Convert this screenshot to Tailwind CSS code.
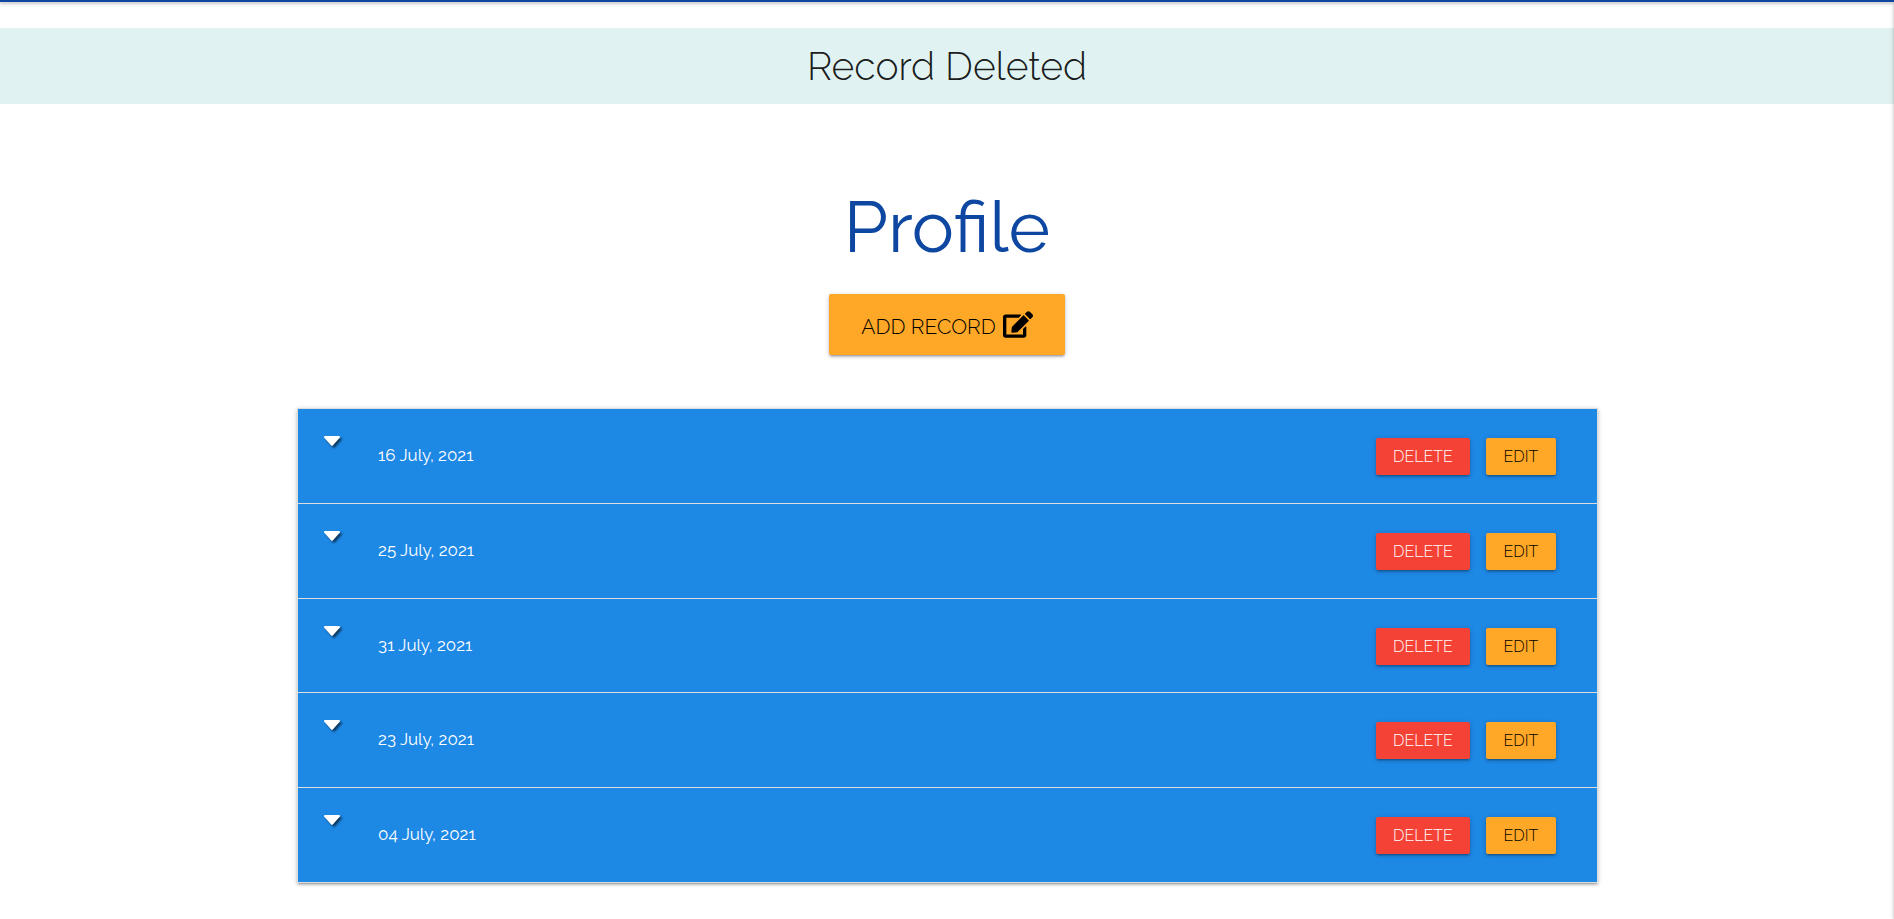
<!DOCTYPE html>
<html lang="en">
<head>
<meta charset="utf-8">
<meta name="viewport" content="width=device-width, initial-scale=1">
<title>Profile</title>
<script src="https://cdn.jsdelivr.net/npm/@tailwindcss/browser@4"></script>
</head>
<body class="relative min-h-screen overflow-x-hidden bg-white font-['Raleway','Lato',sans-serif] text-black/90">
<nav class="h-[2px] bg-[#0d47a1] shadow-[0_2px_2px_0_rgba(0,0,0,0.14),0_3px_1px_-2px_rgba(0,0,0,0.12),0_1px_5px_0_rgba(0,0,0,0.2)]"></nav>
<aside class="fixed inset-y-0 left-full w-72 shadow-[0_2px_2px_0_rgba(0,0,0,0.14),0_3px_1px_-2px_rgba(0,0,0,0.12),0_1px_5px_0_rgba(0,0,0,0.2)]"></aside>
<h4 class="mt-[26px] bg-[#e0f2f1] py-4 text-center text-[39px] leading-[44px] font-light">Record Deleted</h4>
<main class="mx-auto w-[70%] px-3">
  <h1 class="mt-[83px] text-center text-[71px] leading-[80px] text-[#0d47a1]">Profile</h1>
  <div class="mt-[27px] flex justify-center">
    <a href="#" class="flex h-[61px] items-center gap-[7px] rounded-[2px] bg-[#ffa726] px-8 text-[21px] font-light text-black shadow-[0_2px_2px_0_rgba(0,0,0,0.14),0_3px_1px_-2px_rgba(0,0,0,0.12),0_1px_5px_0_rgba(0,0,0,0.2)]"><span class="pt-1">ADD RECORD</span>
      <svg class="h-[27px] w-[30px]" viewBox="0 0 576 512" fill="currentColor" aria-hidden="true"><path d="M402.600 83.200l90.200 90.200c3.800 3.800 3.800 10 0 13.800L274.400 405.600l-92.800 10.300c-12.400 1.400-22.900-9.100-21.500-21.500l10.300-92.800L388.800 83.200c3.800-3.800 10-3.800 13.800 0zm162-22.900l-48.800-48.800c-15.200-15.200-39.900-15.200-55.200 0l-35.400 35.400c-3.800 3.800-3.800 10 0 13.800l90.200 90.200c3.800 3.800 10 3.800 13.800 0l35.400-35.400c15.200-15.300 15.200-40 0-55.200zM384 346.200V448H64V128h229.800c3.200 0 6.200-1.300 8.500-3.500l40-40c7.600-7.600 2.200-20.500-8.500-20.500H48C21.500 64 0 85.500 0 112v352c0 26.500 21.500 48 48 48h352c26.500 0 48-21.500 48-48V306.200c0-10.700-12.900-16-20.500-8.500l-40 40c-2.200 2.300-3.500 5.300-3.500 8.500z"/></svg>
    </a>
  </div>
  <div class="pt-[53px] pb-9 pl-px">
    <ul id="records" class="border border-[#ddd] bg-[#1e88e5] text-white shadow-[0_2px_2px_0_rgba(0,0,0,0.14),0_3px_1px_-2px_rgba(0,0,0,0.12),0_1px_5px_0_rgba(0,0,0,0.2)]"></ul>
  </div>
</main>
<template id="record">
  <li class="flex items-start border-b border-[#ddd] pt-[29px] pr-[41px] pb-7 pl-[26px] last:border-b-0 nth-[3]:pb-[27px]">
    <button type="button" aria-label="Show record" class="-mt-0.5 w-[16px]"><svg class="block h-[10px] w-full overflow-visible drop-shadow-[2px_2px_1px_rgba(0,0,0,0.6)]" viewBox="0 0 16 10" fill="currentColor" aria-hidden="true"><path d="M1 0h14c1 0 1.300 1 .7 1.700L9 9.300c-.6.700-1.400.7-2 0L.3 1.700C-.3 1 0 0 1 0z"/></svg></button>
    <span class="date ml-[38px] text-[17px] leading-[34px]"></span>
    <div class="ml-auto flex gap-4 text-[16px] leading-[37px] font-light">
      <button type="button" class="h-[37px] w-[94px] rounded-[2px] bg-[#f44336] shadow-[0_2px_2px_0_rgba(0,0,0,0.14),0_3px_1px_-2px_rgba(0,0,0,0.12),0_1px_5px_0_rgba(0,0,0,0.2)]">DELETE</button>
      <button type="button" class="h-[37px] w-[70px] rounded-[2px] bg-[#ffa726] text-black shadow-[0_2px_2px_0_rgba(0,0,0,0.14),0_3px_1px_-2px_rgba(0,0,0,0.12),0_1px_5px_0_rgba(0,0,0,0.2)]">EDIT</button>
    </div>
  </li>
</template>
<script>
const list = document.getElementById('records');
const tpl = document.getElementById('record');
['16 July, 2021', '25 July, 2021', '31 July, 2021', '23 July, 2021', '04 July, 2021'].forEach(d => {
  const row = tpl.content.cloneNode(true);
  row.querySelector('.date').textContent = d;
  list.append(row);
});
</script>
</body>
</html>
